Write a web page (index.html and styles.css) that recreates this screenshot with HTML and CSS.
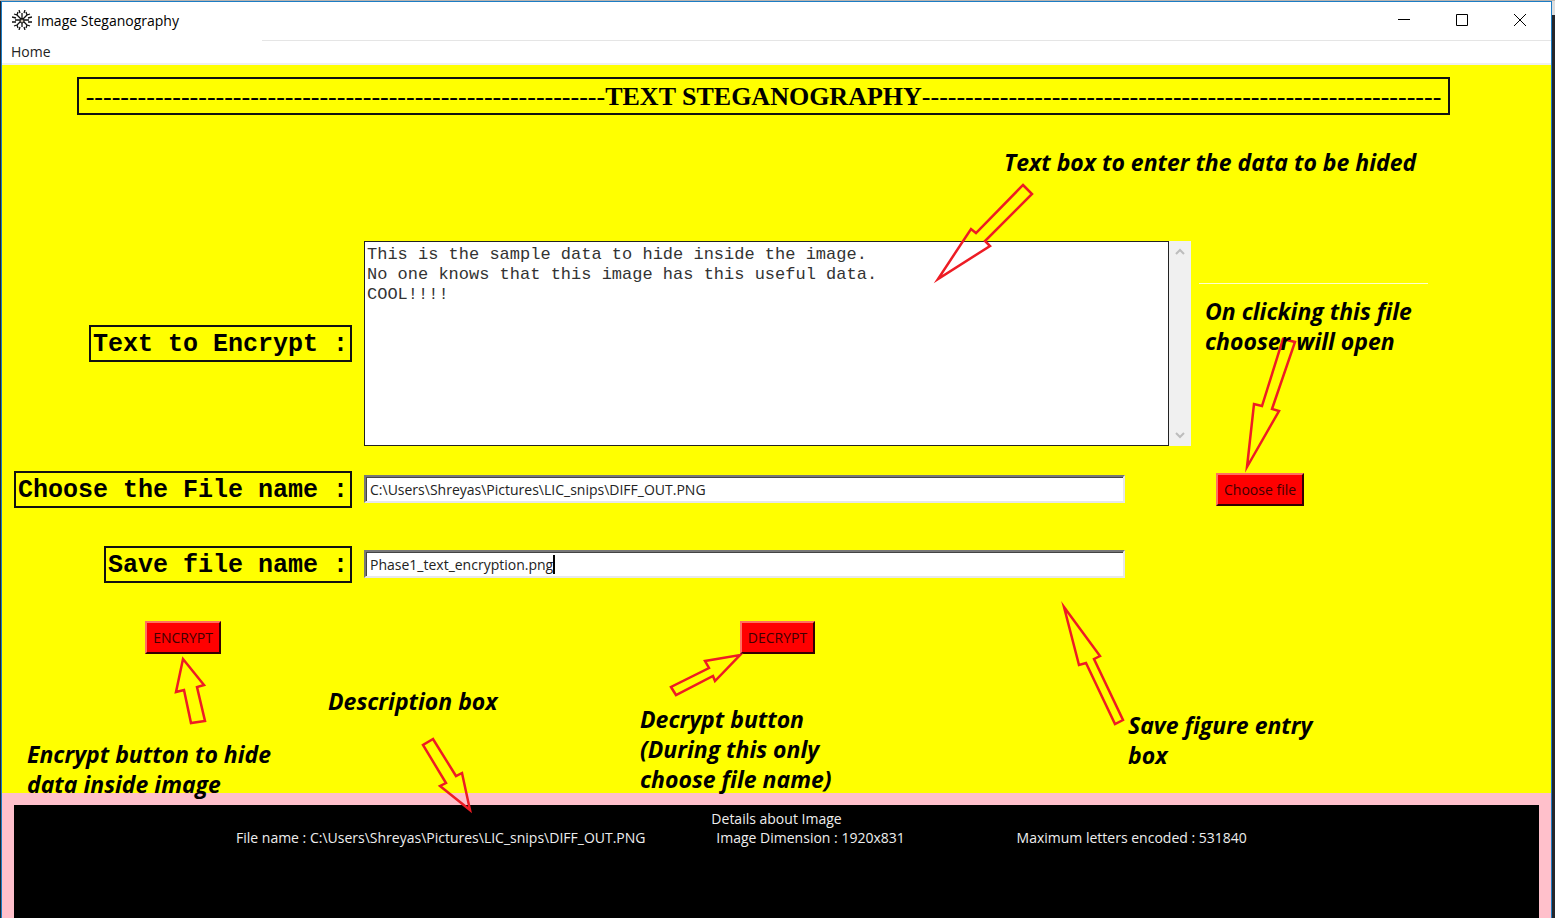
FILE: index.html
```html
<!DOCTYPE html>
<html lang="en">
<head>
<meta charset="utf-8">
<title>Image Steganography</title>
<link rel="stylesheet" href="styles.css">
</head>
<body>
<div class="window">
  <header class="titlebar">
    <svg class="app-icon" viewBox="0 0 20 20" aria-hidden="true">
      <path d="M10 3v14M3 10h14M5 5l10 10M15 5L5 15M7 0l1 3M13 0l-1 3M7 20l1-3M13 20l-1-3M0 7l4 1M0 12h4M20 7l-4 1M20 12h-4M2 4l3 1 1-3M18 4l-3 1-1-3M2 16l3-1 1 3M18 16l-3-1-1 3"/>
      <circle class="app-icon-hub" cx="10" cy="11" r="2"/>
    </svg>
    <h1 class="window-title">Image Steganography</h1>
    <div class="window-controls">
      <button class="control" type="button" aria-label="Minimize"><svg viewBox="0 0 12 12"><path d="M0 5.5h12"/></svg></button>
      <button class="control" type="button" aria-label="Maximize"><svg viewBox="0 0 12 12"><path d="M.5.5h11v11H.5z"/></svg></button>
      <button class="control" type="button" aria-label="Close"><svg viewBox="0 0 12 12"><path d="M0 0l12 12M12 0L0 12"/></svg></button>
    </div>
  </header>
  <nav class="menubar"><button class="menu-item" type="button">Home</button></nav>

  <main class="canvas">
    <h2 class="heading"><span class="dashes">------------------------------------------------------------</span>TEXT STEGANOGRAPHY<span class="dashes">------------------------------------------------------------</span></h2>
    <form class="form">
      <label class="label" for="message">Text to Encrypt :</label>
      <div class="editor">
        <textarea id="message" class="message" spellcheck="false">This is the sample data to hide inside the image.
No one knows that this image has this useful data.
COOL!!!!</textarea>
        <div class="scrollbar" aria-hidden="true">
          <svg viewBox="0 0 10 8"><path d="M1 6l4-4 4 4"/></svg>
          <svg viewBox="0 0 10 8"><path d="M1 2l4 4 4-4"/></svg>
        </div>
      </div>
      <span></span>

      <label class="label" for="source">Choose the File name :</label>
      <input id="source" class="entry" type="text" value="C:\Users\Shreyas\Pictures\LIC_snips\DIFF_OUT.PNG">
      <button class="button button-choose" type="button">Choose file</button>

      <label class="label" for="target">Save file name :</label>
      <div class="entry-wrap">
        <input id="target" class="entry" type="text" value="Phase1_text_encryption.png">
        <span class="caret"></span>
      </div>
      <span></span>

      <button class="button button-action" type="button">ENCRYPT</button>
      <button class="button button-action" type="button">DECRYPT</button>
    </form>
  </main>

  <section class="details">
    <div class="details-box">
      <h3 class="details-title">Details about Image</h3>
      <div class="details-row">
        <span>File name : C:\Users\Shreyas\Pictures\LIC_snips\DIFF_OUT.PNG</span>
        <span>Image Dimension : 1920x831</span>
        <span>Maximum letters encoded : 531840</span>
      </div>
    </div>
  </section>
</div>

<svg class="arrows" width="1555" height="918" viewBox="0 0 1555 918" aria-hidden="true">
  <path class="rule" d="M1199 283.5h229"/>
  <path d="M1023 185L1032 194L985 241L990 246L938 279L971 229L976 233Z"/>
  <path d="M1283 339L1295 342L1272 409L1279 411L1247 467L1254 404L1262 406Z"/>
  <path d="M183 659L204 685L197 687L205 721L191 723L184 690L176 692Z"/>
  <path d="M433 739L423 745L446 783L440 786L470 810L462 773L456 776Z"/>
  <path d="M671 687L676 695L713 676L715 681L740 655L705 661L709 668Z"/>
  <path d="M1064 607L1100 656L1094 659L1123 720L1115 724L1086 663L1079 665Z"/>
</svg>
<p class="note note-text">Text box to enter the data to be hided</p>
<p class="note note-chooser">On clicking this file<br>chooser will open</p>
<p class="note note-encrypt">Encrypt button to hide<br>data inside image</p>
<p class="note note-details">Description box</p>
<p class="note note-decrypt">Decrypt button<br>(During this only<br>choose file name)</p>
<p class="note note-save">Save figure entry<br>box</p>
</body>
</html>
```
FILE: styles.css
```css
* { box-sizing: border-box; }

body {
  margin: 0;
  min-height: 100vh;
  display: flex;
  position: relative;
  padding: 1px 3px 0 1px;
  overflow: hidden;
  background:
    linear-gradient(#b8b4b0, #b8b4b0) 0 0 / 100% 1px no-repeat,
    linear-gradient(#ddd, #ddd) 100% 0 / 3px 15px no-repeat,
    #24262b;
  color: #000;
  font-family: "Open Sans", "Noto Sans", sans-serif;
  font-size: 14px;
}

.window {
  flex: 1;
  display: flex;
  flex-direction: column;
  min-width: 0;
  border: 1px solid #1c7cc4;
  border-bottom: 0;
  background: #fff;
}

.titlebar {
  display: flex;
  align-items: center;
  height: 38px;
  padding: 0 2px 2px 10px;
}

.app-icon {
  width: 20px;
  height: 20px;
  fill: none;
  stroke: #111;
  stroke-width: 1.3;
}

.app-icon-hub {
  fill: #c9bfb0;
  stroke-width: 1;
}

.window-title {
  margin: 0 0 0 5px;
  font-size: 14px;
  font-weight: 400;
}

.window-controls {
  display: flex;
  margin-left: auto;
}

.control {
  display: grid;
  place-items: center;
  width: 58px;
  height: 36px;
  padding: 0;
  border: 0;
  background: none;
}

.control svg {
  width: 12px;
  height: 12px;
  overflow: visible;
  fill: none;
  stroke: #000;
}

.menubar {
  height: 25px;
  padding-left: 9px;
  background: linear-gradient(#e5e5e5, #e5e5e5) 260px 0 / 100% 1px no-repeat #fff;
  border-bottom: 2px solid #f0f0f0;
}

.menu-item {
  height: 23px;
  padding: 0;
  border: 0;
  background: none;
  color: #222;
  font: inherit;
}

.canvas {
  padding: 12px 0 139px;
  background: #ff0;
}

.heading {
  display: flex;
  justify-content: center;
  height: 38px;
  margin: 0 101px 126px 75px;
  border: 2px solid #111;
  overflow: hidden;
  white-space: nowrap;
  font: 700 26px/36px "Liberation Serif", serif;
}

.dashes { font-weight: 400; }

.form {
  display: grid;
  grid-template-columns: 362fr 827fr 360fr;
  align-items: center;
}

.label {
  justify-self: end;
  height: 37px;
  margin: 0 12px 38px 0;
  padding: 0 2px;
  border: 2px solid #111;
  white-space: nowrap;
  font: 700 25px/36px "Liberation Mono", monospace;
}

.label:first-child { margin-bottom: 25px; }

.editor {
  display: flex;
  height: 205px;
  margin-bottom: 25px;
}

.message {
  flex: 1;
  margin: 0;
  padding: 3px 2px;
  border: 1px solid #222;
  border-radius: 0;
  outline: 0;
  resize: none;
  overflow: hidden;
  background: #fff;
  color: #333;
  font: 17px/20px "Liberation Mono", monospace;
}

.scrollbar {
  display: flex;
  flex-direction: column;
  justify-content: space-between;
  align-items: center;
  width: 22px;
  padding: 7px 0;
  background: #f0f0f0;
}

.scrollbar svg {
  width: 10px;
  height: 8px;
  fill: none;
  stroke: #bdbdbd;
  stroke-width: 2;
}

.entry {
  width: 92%;
  height: 28px;
  margin: 0 0 39px;
  padding: 0 4px;
  border: 2px solid;
  border-color: #777 #e8e8e8 #e8e8e8 #777;
  border-radius: 0;
  outline: 0;
  background: #fff;
  box-shadow: inset 1px 1px #444;
  color: #222;
  font: inherit;
}

.entry-wrap { position: relative; }

.entry-wrap .entry { display: block; }

.caret {
  position: absolute;
  left: 189px;
  top: 5px;
  width: 2px;
  height: 19px;
  background: #000;
}

.button {
  height: 33px;
  padding: 0 6px;
  border: 2px solid;
  border-color: #ff7060 #300 #300 #ff7060;
  border-radius: 0;
  background: #f00;
  color: #400000;
  font: inherit;
}

.button-choose {
  justify-self: start;
  margin: 0 0 38px 25px;
}

.button-action { justify-self: center; }

.details {
  flex: 1;
  padding: 12px 12px 0;
  background: #ffc0cb;
}

.details-box {
  height: 100%;
  padding-top: 4px;
  background: #000;
  color: #eee;
  line-height: 19px;
}

.details-title {
  margin: 0;
  font-size: 14px;
  font-weight: 400;
  text-align: center;
}

.details-row {
  display: grid;
  grid-template-columns: 480fr 300fr 522fr;
  padding-left: 222px;
  white-space: nowrap;
}

.arrows {
  position: absolute;
  left: 0;
  top: 0;
  pointer-events: none;
  fill: none;
  stroke: #ed1c24;
  stroke-width: 2.5;
  stroke-miterlimit: 10;
}

.arrows .rule {
  stroke: #ffffd0;
  stroke-width: 1;
}

.note {
  position: absolute;
  margin: 0;
  white-space: nowrap;
  font: italic 700 23px/30px "Open Sans", "Noto Sans", sans-serif;
}

.note-text { left: 1004px; top: 147px; }
.note-chooser { left: 1205px; top: 296px; }
.note-encrypt { left: 27px; top: 739px; }
.note-details { left: 328px; top: 686px; }
.note-decrypt { left: 640px; top: 704px; }
.note-save { left: 1128px; top: 710px; }
```
